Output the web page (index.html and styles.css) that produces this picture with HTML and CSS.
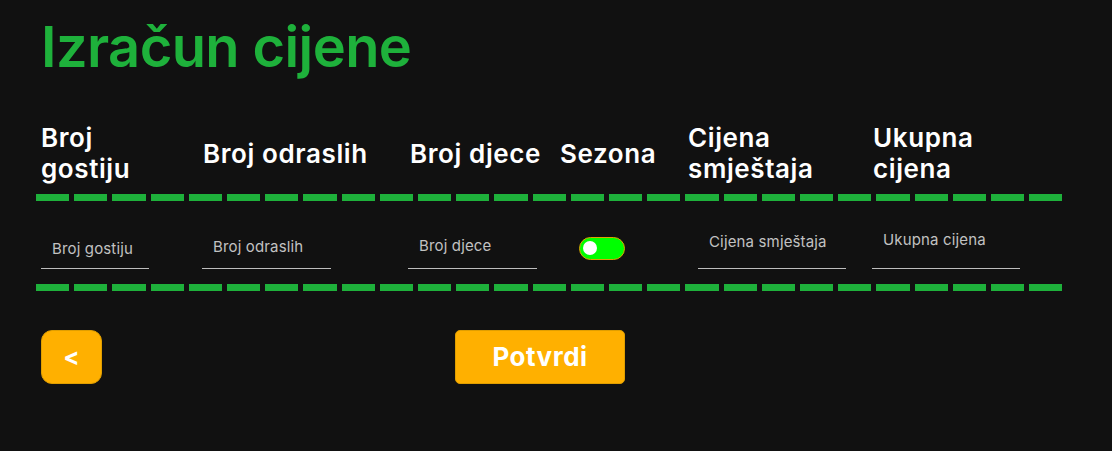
FILE: index.html
```html
<!DOCTYPE html>
<html lang="hr">
<head>
<meta charset="utf-8">
<title>Izračun cijene</title>
<link rel="stylesheet" href="styles.css">
</head>
<body>
<main class="page">
  <h1 class="title">Izračun cijene</h1>
  <div class="table">
    <div class="row head">
      <div class="th">Broj<br>gostiju</div>
      <div class="th">Broj odraslih</div>
      <div class="th">Broj djece</div>
      <div class="th">Sezona</div>
      <div class="th">Cijena<br>smještaja</div>
      <div class="th">Ukupna<br>cijena</div>
    </div>
    <div class="row body">
      <div class="td"><input class="field f1" type="number" placeholder="Broj gostiju"></div>
      <div class="td"><input class="field f2" type="number" placeholder="Broj odraslih"></div>
      <div class="td"><input class="field f3" type="number" placeholder="Broj djece"></div>
      <div class="td"><label class="toggle"><span class="knob"></span></label></div>
      <div class="td"><input class="field f5" type="text" placeholder="Cijena smještaja"></div>
      <div class="td"><input class="field f6" type="text" placeholder="Ukupna cijena"></div>
    </div>
  </div>
  <div class="actions">
    <button class="btn back">&lt;</button>
    <button class="btn submit">Potvrdi</button>
  </div>
</main>
</body>
</html>
```
FILE: styles.css
```css
* { box-sizing: border-box; }
html, body { margin: 0; padding: 0; background: #111111; }
body { font-family: "Inter", "DejaVu Sans", sans-serif; color: #fff; }

.page {
  width: 1112px;
  height: 451px;
  padding: 14px 0 0 36px;
  overflow: hidden;
}

.title {
  margin: 0 0 0 5px;
  font-size: 56px;
  line-height: 1.2;
  font-weight: 600;
  color: #1eb13b;
  letter-spacing: -0.6px;
}

.table { width: 1026px; margin-top: 41px; }

.row {
  display: grid;
  grid-template-columns: 162px 207px 150px 128px 185px 194px;
  background-image: repeating-linear-gradient(90deg, #1eb13b 0 33.2px, transparent 33.2px 38.2px);
  background-repeat: no-repeat;
  background-position: left bottom;
  background-size: 100% 7px;
}

.head { align-items: center; padding-bottom: 16px; }
.th {
  padding-left: 5px;
  font-size: 26px;
  line-height: 1.2;
  font-weight: 600;
  white-space: nowrap;
  letter-spacing: 0.6px;
}

.body { height: 90px; padding-bottom: 22px; align-items: end; }
.td { display: flex; align-items: flex-end; height: 100%; }

.field {
  display: block;
  background: transparent;
  border: 0;
  border-bottom: 1px solid #bdbdbd;
  padding: 0 0 0 11px;
  font-family: "Inter", "DejaVu Sans", sans-serif;
  font-size: 15px;
  letter-spacing: 0.15px;
  color: #ddd;
  outline: none;
  -moz-appearance: textfield;
}
.field::placeholder { color: #c2c2c2; }
.field::-webkit-outer-spin-button,
.field::-webkit-inner-spin-button { -webkit-appearance: none; margin: 0; }

.f1 { margin-left: 5px; width: 108px; height: 40px; }
.f2 { margin-left: 4px; width: 129px; height: 44px; }
.f3 { margin-left: 3px; width: 129px; height: 46px; }
.f5 { margin-left: 15px; width: 148px; height: 54px; }
.f6 { margin-left: 4px; width: 148px; height: 57px; }

.toggle {
  display: flex;
  align-items: center;
  margin: 0 0 9px 24px;
  width: 46px;
  height: 23px;
  border-radius: 12px;
  background: #00ff00;
  border: 1px solid #e0a000;
  padding-left: 3px;
}
.knob {
  width: 14px;
  height: 14px;
  border-radius: 50%;
  background: #fff;
}

.actions {
  display: flex;
  align-items: center;
  margin: 39px 0 0 5px;
}
.btn {
  font-family: "Inter", "DejaVu Sans", sans-serif;
  color: #fff;
  background: #ffb000;
  border: 1px solid #e09e00;
  height: 54px;
  font-weight: 700;
  cursor: pointer;
}
.back {
  width: 61px;
  border-radius: 11px;
  font-size: 24px;
  padding: 0;
}
.submit {
  margin-left: 353px;
  width: 170px;
  border-radius: 5px;
  font-size: 26px;
  letter-spacing: 0.5px;
}
```
